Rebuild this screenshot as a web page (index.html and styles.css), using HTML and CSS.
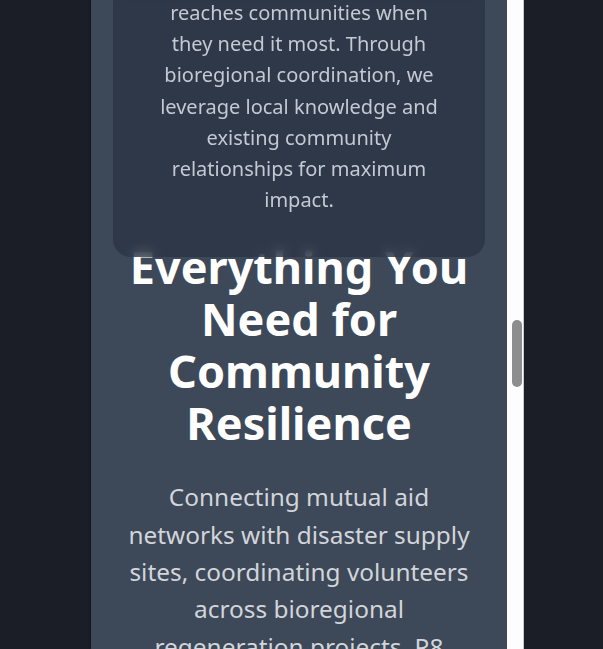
FILE: index.html
```html
<!DOCTYPE html>
<html lang="en">
<head>
<meta charset="utf-8">
<title>Community Resilience</title>
<link rel="stylesheet" href="styles.css">
</head>
<body>
<div class="frame">
  <main class="column">
    <section class="card">
      <p class="card-text">reaches communities when they need it most. Through bioregional coordination, we leverage local knowledge and existing community relationships for maximum impact.</p>
    </section>
    <h1 class="headline">Everything You Need for Community Resilience</h1>
    <p class="lead">Connecting mutual aid networks with disaster supply sites, coordinating volunteers across bioregional regeneration projects. R8 brings everything together.</p>
  </main>
  <div class="scrollbar"><div class="thumb"></div></div>
</div>
</body>
</html>
```
FILE: styles.css
```css
html, body {
  margin: 0;
  padding: 0;
  height: 100%;
  overflow: hidden;
  background: #1b1e26;
  font-family: "Noto Sans", "Open Sans", sans-serif;
}
.frame {
  display: flex;
  height: 649px;
  padding-left: 91px;
}
.column {
  width: 416px;
  flex: none;
  background: #3d4858;
  padding: 0 22px;
  box-sizing: border-box;
  overflow: hidden;
  box-shadow: -1px 0 2px rgba(0,0,0,0.25);
}
.card {
  position: relative;
  z-index: 1;
  margin-top: -38px;
  padding: 35px 44px 42px;
  border-radius: 18px;
  background: rgba(40, 50, 66, 0.72);
  backdrop-filter: blur(6px);
  -webkit-backdrop-filter: blur(6px);
}
.card-text {
  margin: 0;
  font-size: 20px;
  line-height: 31.2px;
  color: #c4cad3;
  text-align: center;
}
.headline {
  margin: -16px 0 0;
  font-size: 45px;
  line-height: 52px;
  font-weight: 700;
  color: #ffffff;
  text-align: center;
}
.lead {
  margin: 29px 0 0;
  padding: 0 6px;
  font-size: 24.4px;
  line-height: 37.3px;
  color: #d2d5da;
  text-align: center;
}
.scrollbar {
  width: 17px;
  flex: none;
  background: #fdfdfd;
  border-right: 1px solid #c9c9c9;
  box-sizing: border-box;
  padding-top: 320px;
  padding-left: 5px;
}
.thumb {
  width: 10px;
  height: 67px;
  border-radius: 5px;
  background: #8d8d8d;
}
```
